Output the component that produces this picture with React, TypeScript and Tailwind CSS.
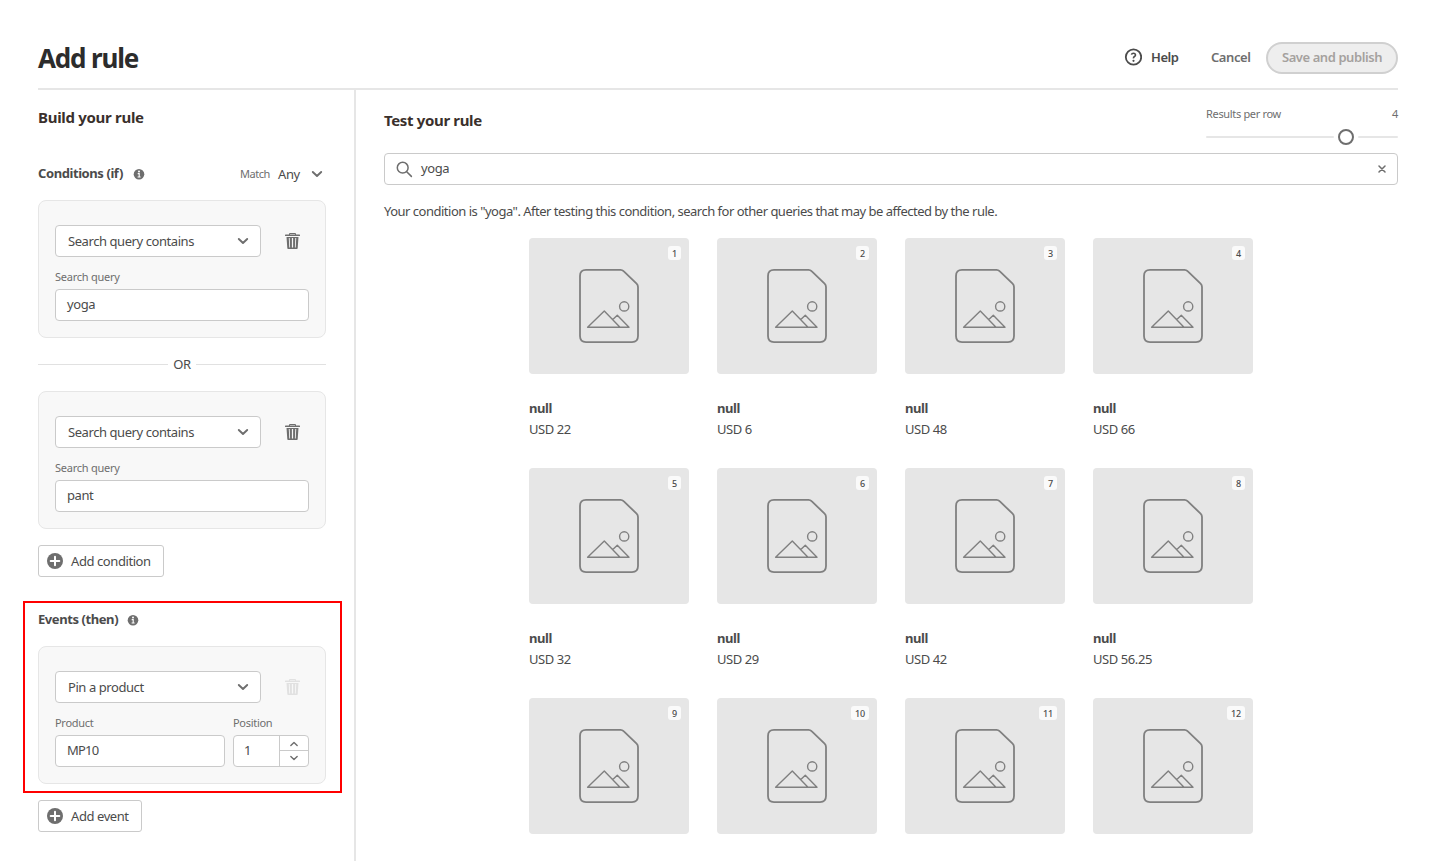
import React from "react";

const products = [
  "USD 22", "USD 6", "USD 48", "USD 66",
  "USD 32", "USD 29", "USD 42", "USD 56.25",
  null, null, null, null,
];

function Chevron({ up = false, small = false }: { up?: boolean; small?: boolean }) {
  return (
    <svg width={small ? 10 : 12} height={small ? 6 : 8} viewBox="0 0 12 8" fill="none" stroke="#6e6e6e" strokeWidth="1.9" strokeLinecap="round" strokeLinejoin="round">
      <path d={up ? "M1.8 6 6 2 10.2 6" : "M1.8 2 6 6 10.2 2"} />
    </svg>
  );
}

function Trash({ color = "#6e6e6e" }: { color?: string }) {
  return (
    <svg width="15" height="18" viewBox="0 0 15 18" className="shrink-0">
      <path d="M4.5 3V1.5H10.5V3" fill="none" stroke={color} />
      <rect x="0" y="2.6" width="15" height="1.4" rx="0.5" fill={color} />
      <path fillRule="evenodd" fill={color} d="M1.5 5H13.5L12.7 16.2Q12.6 17 11.9 17H3.1Q2.4 17 2.3 16.2ZM3.8 6 4.3 15.6H5.1L4.7 6ZM6.9 6V15.6H8.1V6ZM10.3 6 9.9 15.6H10.7L11.2 6Z" />
    </svg>
  );
}

function Info() {
  return (
    <svg width="12" height="12" viewBox="0 0 12 12">
      <circle cx="6" cy="6.2" r="5.3" fill="#6e6e6e" />
      <circle cx="6" cy="3.5" r="1" fill="#fff" />
      <path d="M4.7 5.6H6.2V9M4.6 9H7.6" stroke="#fff" strokeWidth="1.1" fill="none" />
    </svg>
  );
}

function Placeholder() {
  return (
    <svg width="60" height="76" viewBox="0 0 60 76" fill="none" stroke="#808080" strokeLinejoin="round">
      <path strokeWidth="1.8" d="M7 1.9H41.5Q43.3 1.9 44.6 3.2L57.6 15.6Q59 17 59 19V68Q59 74.1 53 74.1H7Q1 74.1 1 68V8Q1 1.9 7 1.9Z" />
      <path strokeWidth="1.4" d="M8.6 59.2 25.3 43 41 59.2ZM33.8 51.6 38.3 47.3 50 59.2H41" />
      <circle cx="45.2" cy="38.4" r="4.6" strokeWidth="1.4" />
    </svg>
  );
}

function Select({ label }: { label: string }) {
  return (
    <div className="flex h-8 w-[206px] items-center justify-between rounded-[4px] border border-[#cacaca] bg-white pr-[11px] pl-3">
      <span className="pt-[2px] tracking-[-0.43px]">{label}</span>
      <Chevron />
    </div>
  );
}

function Condition({ query }: { query: string }) {
  return (
    <div className="h-[138px] rounded-lg border border-[#e6e6e6] bg-[#f8f8f8] px-4 pt-6">
      <div className="flex items-center gap-6">
        <Select label="Search query contains" />
        <Trash />
      </div>
      <div className="mt-[11px] h-[18px] text-[11px] leading-[18px] tracking-[-0.25px] text-[#6e6e6e]">Search query</div>
      <div className="mt-[3px] flex h-8 items-center rounded-[4px] border border-[#cacaca] bg-white px-[11px]">{query}</div>
    </div>
  );
}

function AddButton({ label, className }: { label: string; className: string }) {
  return (
    <button className={`flex h-8 items-center gap-2 rounded-[3px] border border-[#cacaca] bg-white pl-2 ${className}`}>
      <svg width="16" height="16" viewBox="0 0 16 16">
        <circle cx="8" cy="8" r="8" fill="#6e6e6e" />
        <path d="M8 3.7V12.3M3.7 8H12.3" stroke="#fff" strokeWidth="2" strokeLinecap="round" />
      </svg>
      <span className="pt-[2px]">{label}</span>
    </button>
  );
}

export default function App() {
  return (
    <div className="h-[861px] w-[1438px] overflow-hidden bg-white px-10 pl-[38px] font-['Noto_Sans','Open_Sans',sans-serif] text-[13px] tracking-[-0.42px] whitespace-nowrap text-[#4b4b4b]">
      <header className="flex h-[90px] items-center justify-between border-b-2 border-[#e6e6e6] pt-[28px]">
        <h1 className="pt-px text-[26px] font-bold tracking-[-1.15px] text-[#2c2c2c]">Add rule</h1>
        <div className="flex items-center font-semibold">
          <svg width="18" height="18" viewBox="0 0 18 18" fill="none" stroke="#4b4b4b" className="-mt-[2px]">
            <circle cx="9.5" cy="9" r="7.7" strokeWidth="1.8" />
            <path d="M7.4 6.6Q7.8 5.2 9.5 5.2T11.5 6.9Q11.5 7.8 10.4 8.5T9.5 10.4" strokeWidth="1.6" />
            <circle cx="9.5" cy="12.8" r="1.1" fill="#4b4b4b" stroke="none" />
          </svg>
          <span className="ml-[9px] w-[60px]">Help</span>
          <span className="w-[55px] text-[#6e6e6e]">Cancel</span>
          <span className="flex h-8 w-[132px] items-center justify-center rounded-full border-2 border-[#d0d0d0] bg-[#eee] text-[#a5a19e]">Save and publish</span>
        </div>
      </header>
      <div className="flex h-[771px]">
        <aside className="w-[318px] shrink-0 border-r-2 border-[#e6e6e6] pr-7">
          <h2 className="h-[55px] pt-[15px] text-[15px] leading-6 font-bold tracking-[-0.3px] text-[#3a302c]">Build your rule</h2>
          <div className="flex h-[55px] items-center pt-[2px]">
            <h3 className="w-[95px] font-bold">Conditions (if)</h3>
            <Info />
            <span className="ml-auto pt-px text-[11px] text-[#6e6e6e]">Match</span>
            <span className="ml-2 w-[33px] pt-[2px]">Any</span>
            <span className="mr-[3px]"><Chevron /></span>
          </div>
          <Condition query="yoga" />
          <div className="flex h-[53px] items-center gap-[5px]">
            <div className="h-px flex-1 bg-[#e1e1e1]" />
            <span>OR</span>
            <div className="h-px flex-1 bg-[#e1e1e1]" />
          </div>
          <Condition query="pant" />
          <AddButton label="Add condition" className="mt-4 w-[126px]" />
          <section className="mt-6 -ml-[15px] h-[192px] w-[319px] border-2 border-[#f00] px-[13px]">
            <div className="flex h-[43px] items-center pb-[9px]">
              <h3 className="w-[89px] font-bold">Events (then)</h3>
              <Info />
            </div>
            <div className="h-[138px] w-[288px] rounded-lg border border-[#e6e6e6] bg-[#f8f8f8] px-4 pt-6">
              <div className="flex items-center gap-6">
                <Select label="Pin a product" />
                <Trash color="#e1e1e1" />
              </div>
              <div className="mt-[11px] flex h-[18px] text-[11px] leading-[18px] tracking-[-0.3px] text-[#6e6e6e]">
                <span className="w-[178px]">Product</span>
                <span>Position</span>
              </div>
              <div className="mt-[3px] flex gap-2">
                <div className="flex h-8 w-[170px] items-center rounded-[4px] border border-[#cacaca] bg-white px-[11px] tracking-[-0.8px]">MP10</div>
                <div className="flex h-8 w-[76px] rounded-[4px] border border-[#cacaca] bg-white">
                  <span className="flex flex-1 items-center pl-[10px]">1</span>
                  <div className="flex w-[29px] flex-col border-l border-[#cacaca]">
                    <span className="flex h-[15px] items-center justify-center border-b border-[#cacaca] pt-[2px]"><Chevron up small /></span>
                    <span className="flex h-[15px] items-center justify-center pb-px"><Chevron small /></span>
                  </div>
                </div>
              </div>
            </div>
          </section>
          <AddButton label="Add event" className="mt-[7px] w-[104px]" />
        </aside>
        <main className="flex-1 pl-7">
          <div className="flex h-[63px] justify-between">
            <h2 className="pt-[18px] text-[15px] leading-6 font-bold tracking-[-0.35px] text-[#3a302c]">Test your rule</h2>
            <div className="w-48 pt-[15px]">
              <div className="flex h-[18px] justify-between text-[11px] leading-[18px] tracking-[-0.33px] text-[#6e6e6e]">
                <span>Results per row</span>
                <span>4</span>
              </div>
              <div className="mt-[6px] flex h-4 items-center gap-1">
                <div className="h-[2px] w-32 rounded bg-[#e6e6e6]" />
                <div className="h-4 w-4 rounded-full border-2 border-[#6e6e6e]" />
                <div className="h-[2px] flex-1 rounded bg-[#e6e6e6]" />
              </div>
            </div>
          </div>
          <div className="flex h-8 items-center rounded-[4px] border border-[#cacaca] px-[11px]">
            <svg width="17" height="17" viewBox="0 0 17 17" fill="none" stroke="#6e6e6e" strokeWidth="1.5" strokeLinecap="round">
              <circle cx="6.7" cy="6.7" r="5.4" />
              <path d="M10.7 10.7 15.4 15.4" />
            </svg>
            <span className="ml-2 flex-1">yoga</span>
            <svg width="8" height="8" viewBox="0 0 8 8" stroke="#6e6e6e" strokeWidth="1.5" strokeLinecap="round"><path d="M1 1 7 7M7 1 1 7" /></svg>
          </div>
          <p className="h-[53px] pt-4 leading-5 tracking-[-0.5px]">Your condition is "yoga". After testing this condition, search for other queries that may be affected by the rule.</p>
          <div className="grid grid-cols-[repeat(4,160px)] justify-center gap-x-7">
            {products.map((price, i) => (
              <article key={i} className="h-[230px] last:h-[136px]">
                <div className="relative flex h-[136px] items-center justify-center rounded-[4px] bg-[#e6e6e6]">
                  <Placeholder />
                  <span className="absolute top-2 right-2 flex h-[14px] min-w-[13px] items-center justify-center rounded-[3px] bg-[#fafafa] px-1 text-[9px] leading-none font-medium tracking-[-0.1px]">{i + 1}</span>
                </div>
                {price && (
                  <>
                    <div className="mt-[24px] leading-[21px] font-bold">null</div>
                    <div className="leading-[21px]">{price}</div>
                  </>
                )}
              </article>
            ))}
          </div>
        </main>
      </div>
    </div>
  );
}
